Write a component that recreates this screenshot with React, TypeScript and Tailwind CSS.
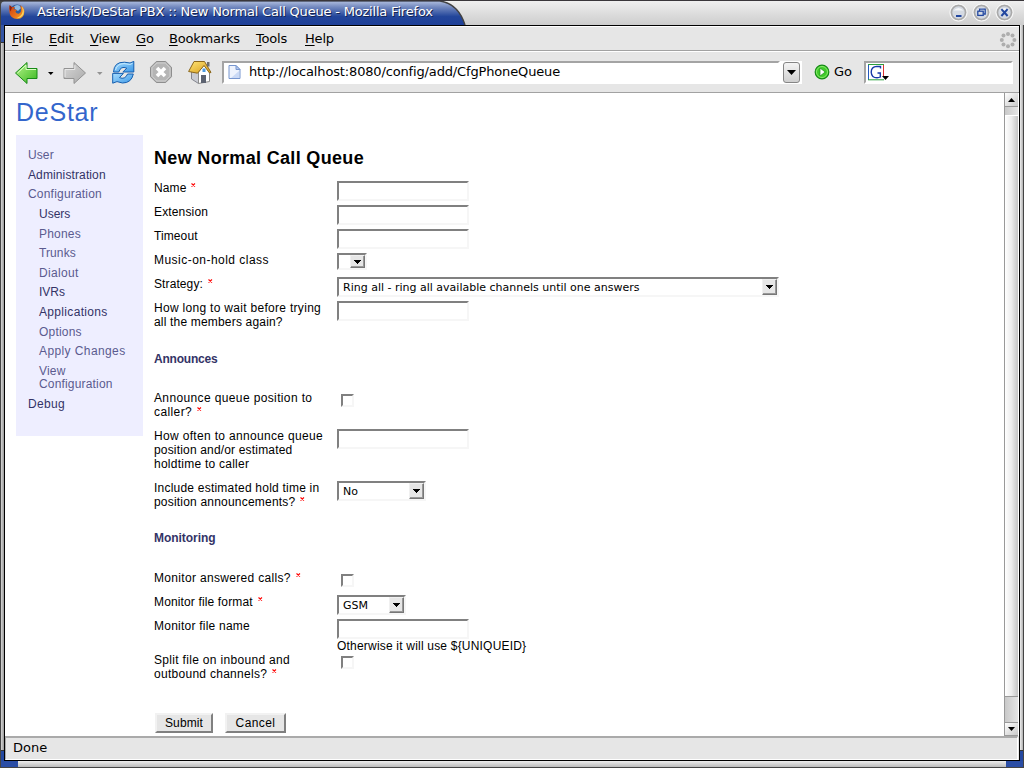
import React from "react";

const ui = "font-['DejaVu_Sans',sans-serif]";

function FirefoxLogo() {
  return (
    <svg width="18" height="18" viewBox="0 0 18 18" className="block">
      <defs>
        <linearGradient id="fx" x1="0" y1="0" x2="1" y2="1">
          <stop offset="0" stopColor="#c93a12" />
          <stop offset=".55" stopColor="#e8701a" />
          <stop offset="1" stopColor="#f9b52c" />
        </linearGradient>
      </defs>
      <circle cx="9" cy="8" r="6.6" fill="#2c5d9e" />
      <path d="M6 3.5Q8 1 11.5 2.4L13 5L10 8L7 6Z" fill="#8fb9df" />
      <path d="M1.6 2.2L4 4.2Q6 3.2 7 4L5.4 6L9 7L7.4 8.6Q8 11 11 10.6Q13.6 9.6 13 5.6L12.2 2.2Q16 4.2 16.4 8.4Q16 15.4 9.4 16Q2 15.6 1.4 9Q1 5 1.6 2.2Z" fill="url(#fx)" />
      <path d="M13.4 3Q17 6 15.4 11.4Q13 15 9 15Q14 13 14.6 8.6Q14.6 5.4 13.4 3Z" fill="#fbd55e" />
      <path d="M1.6 2.2L4 4.2L2.6 8.4Q1.2 6 1.6 2.2Z" fill="#8a1f0d" />
    </svg>
  );
}

function TitleButton({ children }: { children: React.ReactNode }) {
  return (
    <svg width="19" height="19" viewBox="0 0 19 19" className="block">
      <circle cx="9.5" cy="9.5" r="8.6" fill="#dadada" stroke="#fbfbfb" strokeWidth="1" />
      <circle cx="9.5" cy="9.5" r="7" fill="#d5dae2" stroke="#a9a9a9" strokeWidth="1.6" />
      <path d="M4.5 7.5Q9.5 2.5 14.5 7.5Z" fill="#f4f6f8" />
      {children}
    </svg>
  );
}

function TitleBar() {
  return (
    <div className="flex h-[25px] shrink-0 border-t border-[#39363a] bg-linear-to-b from-[#efefef] to-[#cdcdcd]">
      <svg width="466" height="24" viewBox="0 0 466 24" className="block shrink-0">
        <defs>
          <linearGradient id="tb" x1="0" y1="0" x2="0" y2="1">
            <stop offset="0" stopColor="#b1bfdf" />
            <stop offset=".25" stopColor="#7389bf" />
            <stop offset=".65" stopColor="#22459a" />
            <stop offset="1" stopColor="#1f4098" />
          </linearGradient>
        </defs>
        <path d="M0 0H440C453 2 461 11 465 24H0Z" fill="url(#tb)" />
        <path d="M440 0C453 2 461 11 465 24" fill="none" stroke="#414141" strokeWidth="1.4" />
        <path d="M0 0H440" stroke="#15171f" strokeWidth="1" />
        <path d="M0 0H4Q1 1 1 4V24H0Z" fill="#444" />
      </svg>
      <div className="-ml-[466px] flex flex-1 items-center">
        <div className="ml-2 mt-[-2px]"><FirefoxLogo /></div>
        <div className={`${ui} mt-[-2px] ml-[11px] flex-1 text-[13px] leading-[16px] tracking-[-0.19px] whitespace-nowrap text-white [text-shadow:1px_1px_0_#16244f]`}>
          Asterisk/DeStar PBX :: New Normal Call Queue - Mozilla Firefox
        </div>
        <div className="mt-[-2px] mr-[10px] flex gap-[4px]">
          <TitleButton><rect x="7" y="12" width="5.5" height="2" fill="#2247a0" /></TitleButton>
          <TitleButton>
            <path d="M7.5 8V6.2H13.2V11H11.5" fill="none" stroke="#2247a0" strokeWidth="1.3" />
            <rect x="5.8" y="8.2" width="5.4" height="4.2" fill="#d5dae2" stroke="#2247a0" strokeWidth="1.3" />
          </TitleButton>
          <TitleButton><path d="M6.4 6.2L12.6 13M12.6 6.2L6.4 13" stroke="#2247a0" strokeWidth="2" /></TitleButton>
        </div>
      </div>
    </div>
  );
}

function Menu({ label, w }: { label: string; w: string }) {
  return (
    <div className={w}>
      <span className="underline decoration-1 underline-offset-[2px]">{label[0]}</span>
      {label.slice(1)}
    </div>
  );
}

function MenuBar() {
  return (
    <div className={`${ui} flex h-[25px] shrink-0 items-center border-t border-b border-t-white border-b-[#a2a2a2] pl-[7px] text-[13px] leading-[23px] tracking-[-0.2px] text-black`}>
      <Menu label="File" w="w-[37px]" />
      <Menu label="Edit" w="w-[41px]" />
      <Menu label="View" w="w-[46px]" />
      <Menu label="Go" w="w-[33px]" />
      <Menu label="Bookmarks" w="w-[87px]" />
      <Menu label="Tools" w="w-[49px]" />
      <Menu label="Help" w="flex-1" />
      <svg width="18" height="18" viewBox="0 0 18 18" className="mt-[3px] mr-[2px] block" fill="#aeaeae">
        <circle cx="9" cy="3" r="2" /><circle cx="13.5" cy="4.6" r="2" /><circle cx="15.4" cy="9" r="2" /><circle cx="13.5" cy="13.4" r="2" />
        <circle cx="9" cy="15.2" r="2" /><circle cx="4.5" cy="13.4" r="2" /><circle cx="2.8" cy="9" r="2" /><circle cx="4.5" cy="4.6" r="2" />
      </svg>
    </div>
  );
}

function Toolbar() {
  return (
    <div className="flex h-[42px] shrink-0 items-center border-t border-b border-t-white border-b-[#a2a2a2]">
      <svg width="214" height="36" viewBox="5 54 214 36" className="mt-[2px] block shrink-0">
        <defs>
          <linearGradient id="gr" x1="0" y1="0" x2="1" y2="1">
            <stop offset="0" stopColor="#b9f58e" /><stop offset="1" stopColor="#38b81e" />
          </linearGradient>
          <linearGradient id="gy" x1="0" y1="0" x2="1" y2="1">
            <stop offset="0" stopColor="#d8d8d8" /><stop offset="1" stopColor="#a9a9a9" />
          </linearGradient>
          <linearGradient id="rb" x1="0" y1="0" x2="1" y2="1">
            <stop offset="0" stopColor="#a8deff" /><stop offset="1" stopColor="#3b97e6" />
          </linearGradient>
          <linearGradient id="roof" x1="0" y1="0" x2="1" y2="1">
            <stop offset="0" stopColor="#ffe577" /><stop offset="1" stopColor="#d69a17" />
          </linearGradient>
        </defs>
        <path d="M15.5 72L27 61.5V67.5H37V77.5H27V82.5Z" fill="url(#gr)" stroke="#178a17" strokeLinejoin="round" />
        <path d="M17.5 72L26 64.2V68.5H36" fill="none" stroke="#dcffc5" />
        <path d="M48 71H53.5L50.8 74Z" fill="#000" />
        <path d="M85.5 72L74 61.5V67.5H64V77.5H74V82.5Z" fill="url(#gy)" stroke="#929292" strokeLinejoin="round" />
        <path d="M74.8 64.2V68.5H65V76" fill="none" stroke="#e9e9e9" />
        <path d="M97 71H102.5L99.8 74Z" fill="#929292" />
        <path d="M113.5 71Q114 60.8 124.5 61.2L130 62L133.8 60.4V71H122.8L126.8 67.2Q120.8 64.5 118.8 71Z" fill="url(#rb)" stroke="#155fb0" strokeLinejoin="round" />
        <path d="M133.3 73Q131.5 82 122.5 82L117 80.6L112.7 82.2V72.4H123.4L119.5 76.6Q125 79 127.6 73Z" fill="url(#rb)" stroke="#155fb0" strokeLinejoin="round" />
        <path d="M115.5 69Q117 62.7 124 62.6L130 63.4L132.5 62.4" fill="none" stroke="#c9ecff" />
        <path d="M156.3 60.5H165.7L171.5 66.3V75.7L165.7 81.5H156.3L150.5 75.7V66.3Z" fill="#b5b5b5" stroke="#8e8e8e" />
        <path d="M156.8 62H165.2L170 66.8V75.2L165.2 80H156.8L152 75.2V66.8Z" fill="none" stroke="#d0d0d0" />
        <path d="M157 67L165 75M165 67L157 75" stroke="#fff" strokeWidth="3.6" />
        <path d="M191.5 71V78L198.5 82.5V69L194 65Z" fill="#c9cbd2" stroke="#84868f" />
        <path d="M198.5 82.5V71L204.5 63.5L209.5 71V80.5Z" fill="#fff" stroke="#8c8c8c" />
        <path d="M188.6 70.5L194 60.5H204.5L211 71.4L209.5 72L204 64.5L197.5 72.2Z" fill="url(#roof)" stroke="#8b671c" strokeLinejoin="round" />
        <rect x="201" y="74" width="5" height="8" fill="#5c6270" />
        <rect x="202.5" y="67.5" width="3" height="3.5" fill="#4d9be0" />
        <rect x="207" y="61" width="2.5" height="4.5" fill="#6d6d6d" />
      </svg>
      <div className="ml-[3px] flex h-[23px] flex-1 border-2 border-[#a4a4a4] border-r-white border-b-white bg-white">
        <svg width="24" height="19" viewBox="0 0 24 19" className="block shrink-0">
          <path d="M5 2.5H12L16 6.5V15.5H5Z" fill="#eef3fd" stroke="#7796cf" />
          <path d="M12 2.5V6.5H16Z" fill="#b8cbee" stroke="#7796cf" />
          <path d="M7 15L15 8V15Z" fill="#cbdaf6" />
        </svg>
        <div className={`${ui} ml-px flex-1 text-[13px] leading-[18px] tracking-[-0.15px] whitespace-nowrap text-black`}>http://localhost:8080/config/add/CfgPhoneQueue</div>
      </div>
      <div className="flex h-[23px] w-[22px] items-center justify-center bg-white">
        <div className="flex h-[21px] w-[17px] items-center justify-center rounded-[3px] border border-[#858585] bg-linear-to-b from-[#f5f5f5] to-[#cfcfcf]">
          <svg width="9" height="5" viewBox="0 0 9 5"><path d="M0 0H9L4.5 5Z" /></svg>
        </div>
      </div>
      <svg width="16" height="16" viewBox="0 0 16 16" className="ml-[12px] block">
        <circle cx="8" cy="8" r="6.8" fill="#3fca2a" stroke="#148a14" strokeWidth="1.2" />
        <circle cx="8" cy="8" r="5.5" fill="none" stroke="#8aeb6d" />
        <path d="M6 4L11.2 8L6 12Z" fill="#fff" stroke="#1e8e1b" strokeWidth=".7" />
      </svg>
      <div className={`${ui} ml-[4px] w-[30px] text-[13px] text-black`}>Go</div>
      <div className="mr-[6px] flex h-[23px] w-[149px] items-center border-2 border-[#a4a4a4] border-r-white border-b-white bg-white">
        <svg width="23" height="17" viewBox="0 0 23 17" className="ml-[2px] block">
          <path d="M.5 16V.5" stroke="#2459bd" /><path d="M0 .5H16" stroke="#2ba03c" /><path d="M15.5 1V12" stroke="#d33" /><path d="M0 15.8H16" stroke="#2ba03c" />
          <path d="M12.5 4.5V2.5Q11 2.4 8.8 2.4Q3.2 2.7 3.2 8.2Q3.6 13.8 9 13.8Q11 13.7 12.3 13V9H9.5" fill="none" stroke="#1738a8" strokeWidth="1.4" />
          <path d="M14 12H21L17.5 16Z" fill="#000" />
        </svg>
      </div>
    </div>
  );
}

const menu: [string, string][] = [
  ["User", "text-[#5b5b8f] tracking-[0.1px]"],
  ["Administration", "text-[#333366] tracking-[0.12px]"],
  ["Configuration", "text-[#5b5b8f] tracking-[0.2px]"],
  ["Users", "ml-[11px] text-[#333366]"],
  ["Phones", "ml-[11px] text-[#5b5b8f] tracking-[0.2px]"],
  ["Trunks", "ml-[11px] text-[#5b5b8f] tracking-[0.1px]"],
  ["Dialout", "ml-[11px] text-[#5b5b8f] tracking-[0.35px]"],
  ["IVRs", "ml-[11px] text-[#333366]"],
  ["Applications", "ml-[11px] text-[#333366] tracking-[0.33px]"],
  ["Options", "ml-[11px] text-[#5b5b8f] tracking-[0.2px]"],
  ["Apply Changes", "ml-[11px] text-[#5b5b8f] tracking-[0.4px]"],
  ["View Configuration", "ml-[11px] text-[#5b5b8f] tracking-[0.17px]"],
  ["Debug", "text-[#333366] tracking-[0.3px]"],
];

function Sidebar() {
  return (
    <nav className="ml-[11px] flex h-[301px] w-[127px] shrink-0 flex-col gap-[6.65px] bg-[#eeeeff] pt-[14px] pr-2 pl-3 text-[12px] leading-[13px]">
      {menu.map(([label, cls]) => <a key={label} className={cls}>{label}</a>)}
    </nav>
  );
}

const bevelIn = "border-2 border-[#808080] border-r-[#f6f6f6] border-b-[#f6f6f6] bg-white";

function TextInput() {
  return <input className={`${bevelIn} block h-[20px] w-[132px] outline-none`} />;
}

function Check() {
  return <input type="checkbox" className={`${bevelIn} mt-[3px] ml-[4px] block h-[13px] w-[13px] appearance-none`} />;
}

function Select({ value, cls }: { value: string; cls: string }) {
  return (
    <div className={`${bevelIn} ${cls} flex`}>
      <div className={`${ui} flex-1 pl-1 text-[11px] leading-[17px] whitespace-nowrap text-black`}>{value}</div>
      <div className="flex w-[15px] items-center justify-center border border-t-[#f0f0f0] border-r-[#777] border-b-[#777] border-l-[#f0f0f0] bg-[#e6e6e6] shadow-[inset_-1px_-1px_0_#999]">
        <svg width="7" height="4" viewBox="0 0 7 4" shapeRendering="crispEdges"><path d="M0 0H7V1H6V2H5V3H4V4H3V3H2V2H1V1H0Z" /></svg>
      </div>
    </div>
  );
}

function Row({ h, lines, star, children }: { h: string; lines: [string, string][]; star?: string; children: React.ReactNode }) {
  return (
    <div className={`${h} flex`}>
      <div className="w-[183px] shrink-0">
        {lines.map(([text, cls], i) => (
          <div key={text} className="flex h-[14px] whitespace-nowrap">
            <span className={cls}>{text}</span>
            {star && i === lines.length - 1 && (
              <svg width="5" height="4" viewBox="0 0 5 4" className={`${star} mt-[2px] ml-[5px] block`}>
                <path d="M.5 .5L4 3.5M4 .5L.5 3.5" stroke="currentColor" strokeWidth="1.1" />
              </svg>
            )}
          </div>
        ))}
      </div>
      <div>{children}</div>
    </div>
  );
}

const red = "text-[#ff0000]";

function Form() {
  return (
    <main className="ml-[11px] flex-1 pt-[12px] text-[12px] leading-[14px] text-black">
      <h1 className="h-[34px] text-[18px] leading-[23px] font-bold tracking-[0.33px]">New Normal Call Queue</h1>
      <Row h="h-[24px]" lines={[["Name", "tracking-[0.1px]"]]} star={red}><TextInput /></Row>
      <Row h="h-[24px]" lines={[["Extension", "tracking-[0.15px]"]]}><TextInput /></Row>
      <Row h="h-[24px]" lines={[["Timeout", "tracking-[0.1px]"]]}><TextInput /></Row>
      <Row h="h-[24px]" lines={[["Music-on-hold class", "tracking-[0.47px]"]]}><Select value="" cls="h-[17px] w-[30px]" /></Row>
      <Row h="h-[24px]" lines={[["Strategy:", "tracking-[0.1px]"]]} star={red}>
        <Select value="Ring all - ring all available channels until one answers" cls="h-[20px] w-[442px]" />
      </Row>
      <Row h="h-[51px]" lines={[["How long to wait before trying", "tracking-[0.3px]"], ["all the members again?", "tracking-[0.18px]"]]}><TextInput /></Row>
      <h2 className="h-[39px] font-bold tracking-[-0.2px] text-[#333366]">Announces</h2>
      <Row h="h-[38px]" lines={[["Announce queue position to", "tracking-[0.37px]"], ["caller?", "tracking-[0.4px]"]]} star={red}><Check /></Row>
      <Row h="h-[52px]" lines={[["How often to announce queue", "tracking-[0.33px]"], ["position and/or estimated", "tracking-[0.17px]"], ["holdtime to caller", "tracking-[0.25px]"]]}><TextInput /></Row>
      <Row h="h-[50px]" lines={[["Include estimated hold time in", "tracking-[0.22px]"], ["position announcements?", "tracking-[0.2px]"]]} star={red}><Select value="No" cls="h-[20px] w-[89px]" /></Row>
      <h2 className="h-[40px] font-bold tracking-[-0.05px] text-[#333366]">Monitoring</h2>
      <Row h="h-[24px]" lines={[["Monitor answered calls?", "tracking-[0.32px]"]]} star={red}><Check /></Row>
      <Row h="h-[24px]" lines={[["Monitor file format", "tracking-[0.14px]"]]} star={red}><Select value="GSM" cls="h-[20px] w-[69px]" /></Row>
      <Row h="h-[34px]" lines={[["Monitor file name", "tracking-[0.23px]"]]}>
        <TextInput />
        <div className="tracking-[0.2px] whitespace-nowrap">{"Otherwise it will use ${UNIQUEID}"}</div>
      </Row>
      <Row h="h-[60px]" lines={[["Split file on inbound and", "tracking-[0.32px]"], ["outbound channels?", "tracking-[0.28px]"]]} star={red}><Check /></Row>
      <div className="ml-px flex gap-[12px]">
        <button className="h-[20px] w-[58px] border-2 border-[#808080] border-t-[#f2f2f2] border-l-[#f2f2f2] bg-[#e6e6e6] tracking-[0.1px]">Submit</button>
        <button className="h-[20px] w-[61px] border-2 border-[#808080] border-t-[#f2f2f2] border-l-[#f2f2f2] bg-[#e6e6e6] tracking-[0.4px]">Cancel</button>
      </div>
    </main>
  );
}

function ScrollBar() {
  const btn = "flex h-[14px] shrink-0 items-center justify-center bg-linear-to-br from-white to-[#c8c8c8]";
  return (
    <div className="mr-px flex w-[14px] shrink-0 flex-col border-l border-[#999] bg-linear-to-r from-[#c9c9c9] to-[#e5e5e5]">
      <div className={`${btn} border-b border-[#999]`}><svg width="7" height="4" viewBox="0 0 7 4"><path d="M0 4H7L3.5 0Z" /></svg></div>
      <div className="mt-[8px] h-[582px] border-b border-[#999] border-t border-t-white bg-linear-to-r from-white via-[#ececec] to-[#c4c4c4]" />
      <div className="flex-1" />
      <div className={`${btn} border-t border-b border-[#999]`}><svg width="7" height="4" viewBox="0 0 7 4"><path d="M0 0H7L3.5 4Z" /></svg></div>
    </div>
  );
}

export default function App() {
  return (
    <div className="flex h-[768px] w-[1024px] flex-col overflow-hidden bg-[#c8c8c8] font-['Liberation_Sans',sans-serif]">
      <TitleBar />
      <div className="flex min-h-0 flex-1">
        <div className="flex w-[4px] flex-col border-l border-[#444]">
          <div className="h-[18px] border-b border-[#333] bg-[#3455a5]" />
          <div className="flex-1 bg-linear-to-r from-[#d5d5d5] to-[#999]" />
          <div className="h-[11px] border-t border-[#333] bg-[#2448a0]" />
        </div>
        <div className="flex w-[1016px] shrink-0 flex-col border border-black bg-[#e6e6e6]">
          <MenuBar />
          <Toolbar />
          <div className="flex h-[643px] shrink-0 overflow-hidden bg-white">
            <div className="flex-1">
              <div className="h-[42px] pl-[11px] text-[25px] leading-[38px] tracking-[0.75px] text-[#3366cc]">DeStar</div>
              <div className="flex">
                <Sidebar />
                <Form />
              </div>
            </div>
            <ScrollBar />
          </div>
          <div className={`${ui} mr-[1px] flex-1 border-t-2 border-r border-b border-l border-t-[#aaa] border-r-white border-b-white border-l-[#aaa] pl-[7px] text-[13px] leading-[19px] text-black`}>Done</div>
        </div>
        <div className="flex w-[4px] flex-col border-r border-[#444]">
          <div className="flex-1 bg-linear-to-r from-[#efefef] to-[#b0b0b0]" />
          <div className="h-[11px] border-t border-[#333] bg-[#2448a0]" />
        </div>
      </div>
      <div className="flex h-[7px] shrink-0 border-x border-b border-[#444]">
        <div className="w-[17px] bg-[#2a4da5]" />
        <div className="flex-1 bg-linear-to-b from-[#eee] to-[#bbb]" />
        <div className="w-[17px] bg-[#2a4da5]" />
      </div>
    </div>
  );
}
